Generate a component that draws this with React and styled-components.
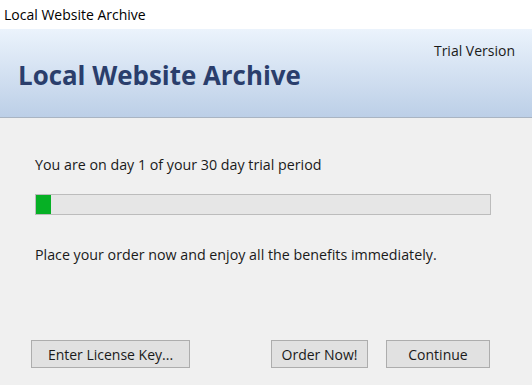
import React from "react";
import styled, { createGlobalStyle } from "styled-components";

const Global = createGlobalStyle`
  html, body { margin: 0; padding: 0; }
  body {
    width: 532px;
    height: 385px;
    overflow: hidden;
    font-family: "Open Sans", "Noto Sans", sans-serif;
    background: #f0f0f0;
  }
`;

const Window = styled.div`
  width: 532px;
  height: 385px;
  display: flex;
  flex-direction: column;
  background: #f0f0f0;
  color: #1a1a1a;
`;

const TitleBar = styled.div`
  height: 29px;
  background: #ffffff;
  display: flex;
  align-items: center;
  padding-left: 4px;
  font-size: 14px;
  color: #000;
  box-sizing: border-box;
`;

const Header = styled.div`
  height: 89px;
  box-sizing: border-box;
  background: linear-gradient(to bottom, #ebf3fc 0%, #bccfe7 100%);
  border-bottom: 1px solid #a9b4c2;
  position: relative;
  display: flex;
  align-items: flex-end;
  padding: 0 0 26px 18px;
`;

const AppTitle = styled.h1`
  margin: 0;
  font-size: 25.9px;
  line-height: 32px;
  font-weight: 700;
  color: #2a3e6c;
  letter-spacing: 0;
`;

const Edition = styled.div`
  position: absolute;
  top: 12px;
  right: 17px;
  font-size: 14px;
  color: #1a1a1a;
`;

const Body = styled.div`
  flex: 1;
  display: flex;
  flex-direction: column;
  padding: 37px 41px 17px 35px;
`;

const Message = styled.p`
  margin: 0;
  font-size: 14.25px;
  line-height: 20px;
  color: #1a1a1a;
`;

const Progress = styled.div`
  margin: 19px 0 30px;
  height: 21px;
  box-sizing: border-box;
  border: 1px solid #bcbcbc;
  background: #e6e6e6;
  display: flex;
`;

const Fill = styled.div`
  background: #06b025;
  height: 100%;
`;

const Buttons = styled.div`
  margin-top: auto;
  display: flex;
  align-items: center;
`;

const Button = styled.button`
  height: 28px;
  width: ${(p) => p.$w}px;
  margin-left: ${(p) => p.$ml || 0}px;
  box-sizing: border-box;
  border: 1px solid #adadad;
  background: #e1e1e1;
  font-family: inherit;
  font-size: 14px;
  color: #1a1a1a;
  padding: 0;
  cursor: default;
`;

export default function App() {
  const day = 1;
  const total = 30;
  return (
    <>
      <Global />
      <Window>
        <TitleBar>Local Website Archive</TitleBar>
        <Header>
          <AppTitle>Local Website Archive</AppTitle>
          <Edition>Trial Version</Edition>
        </Header>
        <Body>
          <Message>You are on day {day} of your {total} day trial period</Message>
          <Progress>
            <Fill style={{ width: `${(day / total) * 100}%` }} />
          </Progress>
          <Message>Place your order now and enjoy all the benefits immediately.</Message>
          <Buttons>
            <Button $w={159} style={{ marginLeft: -4 }}>Enter License Key...</Button>
            <Button $w={97} $ml={81}>Order Now!</Button>
            <Button $w={104} $ml={18}>Continue</Button>
          </Buttons>
        </Body>
      </Window>
    </>
  );
}
